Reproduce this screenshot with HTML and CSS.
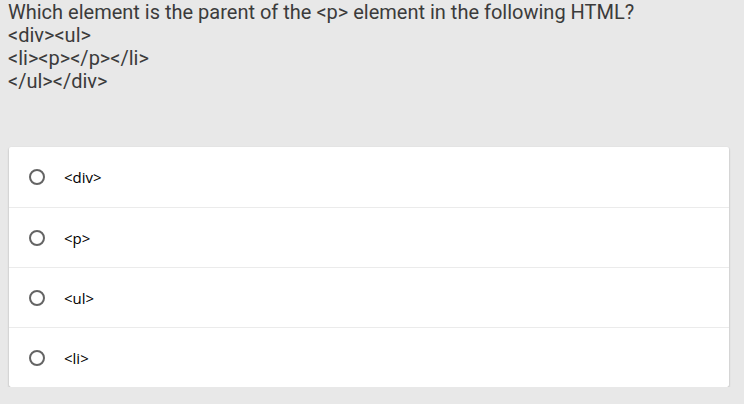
FILE: index.html
```html
<!DOCTYPE html>
<html>
<head>
<meta charset="utf-8">
<link rel="stylesheet" href="styles.css">
</head>
<body>
<div class="question">Which element is the parent of the &lt;p&gt; element in the following HTML?<br>&lt;div&gt;&lt;ul&gt;<br>&lt;li&gt;&lt;p&gt;&lt;/p&gt;&lt;/li&gt;<br>&lt;/ul&gt;&lt;/div&gt;</div>
<div class="card">
  <label class="option"><span class="radio"></span><span class="label">&lt;div&gt;</span></label>
  <label class="option"><span class="radio"></span><span class="label">&lt;p&gt;</span></label>
  <label class="option"><span class="radio"></span><span class="label">&lt;ul&gt;</span></label>
  <label class="option"><span class="radio"></span><span class="label">&lt;li&gt;</span></label>
</div>
</body>
</html>
```
FILE: styles.css
```css
html, body {
  margin: 0;
  background: #e8e8e8;
}
body {
  padding: 0 15px 0 9px;
}
.question {
  font-family: Roboto, "Liberation Sans", sans-serif;
  font-size: 20px;
  line-height: 23px;
  color: #3b3b3b;
  padding-top: 1px;
  margin-left: -1px;
  height: 92px;
}
.card {
  margin-top: 54px;
  background: #fff;
  border-radius: 2px;
  box-shadow: 0 1px 2px rgba(0,0,0,0.3);
  display: flex;
  flex-direction: column;
}
.option {
  height: 60px;
  display: flex;
  align-items: center;
  padding-left: 20px;
  border-top: 1px solid #ebebeb;
  box-sizing: border-box;
}
.option:first-child {
  border-top: none;
}
.radio {
  width: 16px;
  height: 16px;
  border: 2px solid #646464;
  border-radius: 50%;
  box-sizing: border-box;
  flex: none;
}
.label {
  margin-left: 19px;
  font-family: "Open Sans", "Liberation Sans", sans-serif;
  font-size: 15px;
  color: #000;
}
```
